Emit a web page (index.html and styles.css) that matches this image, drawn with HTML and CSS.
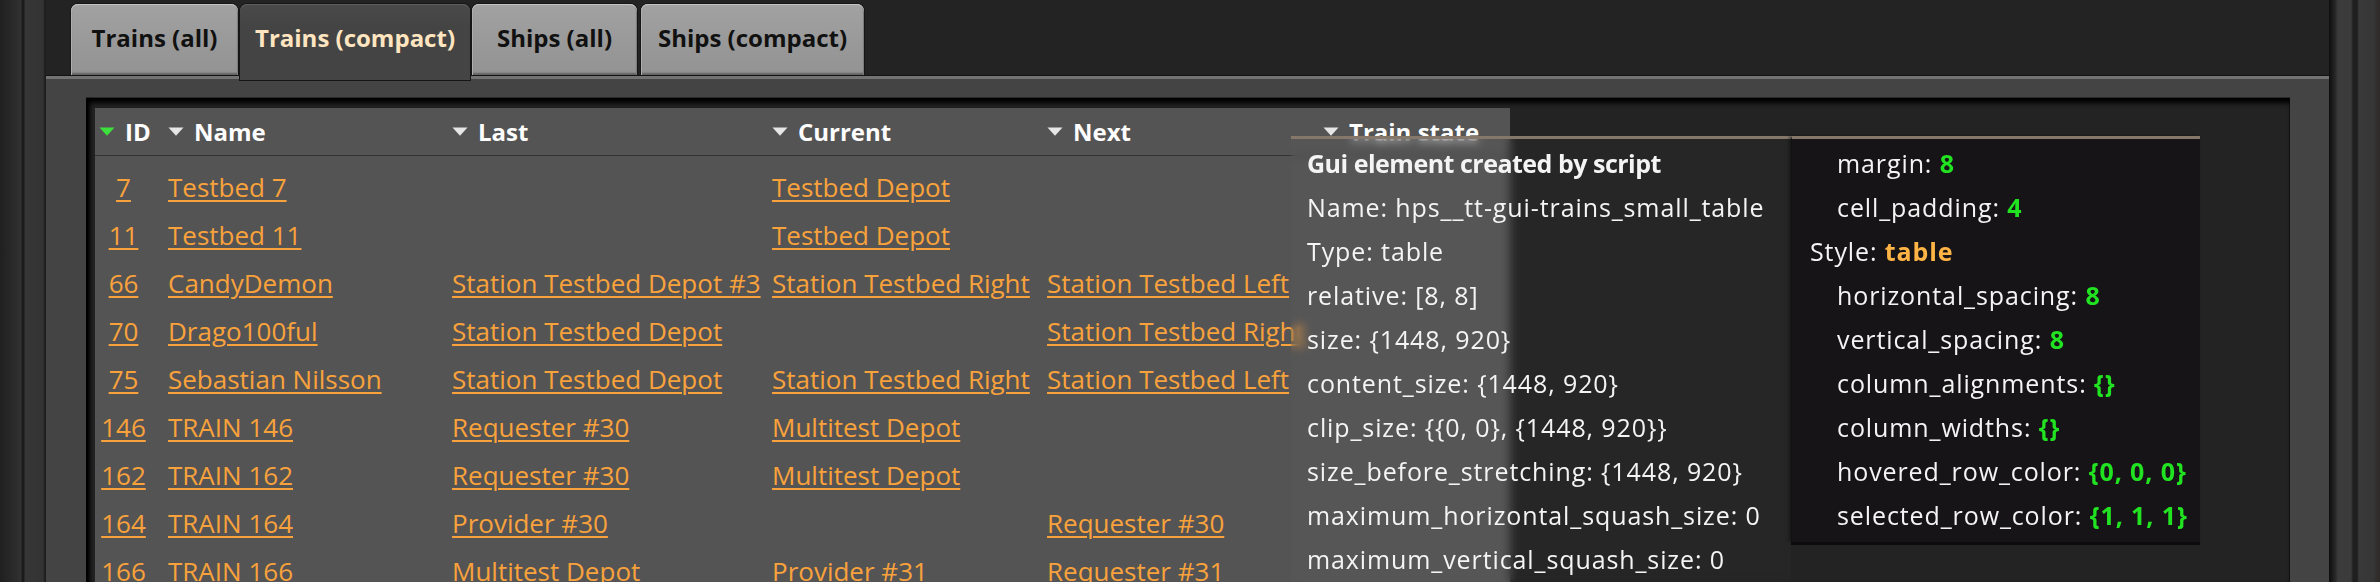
FILE: index.html
```html
<!DOCTYPE html>
<html>
<head>
<meta charset="utf-8">
<link rel="stylesheet" href="styles.css">
</head>
<body>
<div class="window">
  <div class="frame-left"></div>
  <div class="main">
    <div class="tabbar">
      <div class="tab t1">Trains (all)</div>
      <div class="tab t2 active">Trains (compact)</div>
      <div class="tab t3">Ships (all)</div>
      <div class="tab t4">Ships (compact)</div>
    </div>
    <div class="panel">
      <div class="inner">
        <div class="table">
          <div class="thead">
            <div class="th"><svg class="tri" width="16" height="9" viewBox="0 0 16 9"><polygon points="0.5,0.5 15.5,0.5 8,8.8" fill="#3ee03e"/></svg>ID</div>
            <div class="th"><svg class="tri" width="16" height="9" viewBox="0 0 16 9"><polygon points="0.5,0.5 15.5,0.5 8,8.8" fill="#e6e6e6"/></svg>Name</div>
            <div class="th"><svg class="tri" width="16" height="9" viewBox="0 0 16 9"><polygon points="0.5,0.5 15.5,0.5 8,8.8" fill="#e6e6e6"/></svg>Last</div>
            <div class="th"><svg class="tri" width="16" height="9" viewBox="0 0 16 9"><polygon points="0.5,0.5 15.5,0.5 8,8.8" fill="#e6e6e6"/></svg>Current</div>
            <div class="th"><svg class="tri" width="16" height="9" viewBox="0 0 16 9"><polygon points="0.5,0.5 15.5,0.5 8,8.8" fill="#e6e6e6"/></svg>Next</div>
            <div class="th"><svg class="tri" width="16" height="9" viewBox="0 0 16 9"><polygon points="0.5,0.5 15.5,0.5 8,8.8" fill="#e6e6e6"/></svg>Train state</div>
          </div>
          <div class="tbody">
            <div class="td id"><a>7</a></div><div class="td"><a>Testbed 7</a></div><div class="td"></div><div class="td"><a>Testbed Depot</a></div><div class="td"></div><div class="td"></div>
            <div class="td id"><a>11</a></div><div class="td"><a>Testbed 11</a></div><div class="td"></div><div class="td"><a>Testbed Depot</a></div><div class="td"></div><div class="td"></div>
            <div class="td id"><a>66</a></div><div class="td"><a>CandyDemon</a></div><div class="td"><a>Station Testbed Depot #3</a></div><div class="td"><a>Station Testbed Right</a></div><div class="td"><a>Station Testbed Left</a></div><div class="td"></div>
            <div class="td id"><a>70</a></div><div class="td"><a>Drago100ful</a></div><div class="td"><a>Station Testbed Depot</a></div><div class="td"></div><div class="td"><a>Station Testbed Right</a></div><div class="td"></div>
            <div class="td id"><a>75</a></div><div class="td"><a>Sebastian Nilsson</a></div><div class="td"><a>Station Testbed Depot</a></div><div class="td"><a>Station Testbed Right</a></div><div class="td"><a>Station Testbed Left</a></div><div class="td"></div>
            <div class="td id"><a>146</a></div><div class="td"><a>TRAIN 146</a></div><div class="td"><a>Requester #30</a></div><div class="td"><a>Multitest Depot</a></div><div class="td"></div><div class="td"></div>
            <div class="td id"><a>162</a></div><div class="td"><a>TRAIN 162</a></div><div class="td"><a>Requester #30</a></div><div class="td"><a>Multitest Depot</a></div><div class="td"></div><div class="td"></div>
            <div class="td id"><a>164</a></div><div class="td"><a>TRAIN 164</a></div><div class="td"><a>Provider #30</a></div><div class="td"></div><div class="td"><a>Requester #30</a></div><div class="td"></div>
            <div class="td id"><a>166</a></div><div class="td"><a>TRAIN 166</a></div><div class="td"><a>Multitest Depot</a></div><div class="td"><a>Provider #31</a></div><div class="td"><a>Requester #31</a></div><div class="td"></div>
          </div>
        </div>
      </div>
    </div>
  </div>
  <div class="frame-right"></div>
</div>

<div class="tooltip">
  <div class="tip-box tip-main">
    <div class="line b">Gui element created by script</div>
    <div class="line">Name: hps__tt-gui-trains_small_table</div>
    <div class="line">Type: table</div>
    <div class="line">relative: [8, 8]</div>
    <div class="line">size: {1448, 920}</div>
    <div class="line">content_size: {1448, 920}</div>
    <div class="line">clip_size: {{0, 0}, {1448, 920}}</div>
    <div class="line">size_before_stretching: {1448, 920}</div>
    <div class="line">maximum_horizontal_squash_size: 0</div>
    <div class="line">maximum_vertical_squash_size: 0</div>
  </div>
  <div class="tip-box tip-style">
    <div class="line ind">margin: <span class="g">8</span></div>
    <div class="line ind">cell_padding: <span class="g">4</span></div>
    <div class="line">Style: <span class="o">table</span></div>
    <div class="line ind">horizontal_spacing: <span class="g">8</span></div>
    <div class="line ind">vertical_spacing: <span class="g">8</span></div>
    <div class="line ind">column_alignments: <span class="g">{}</span></div>
    <div class="line ind">column_widths: <span class="g">{}</span></div>
    <div class="line ind">hovered_row_color: <span class="g">{0, 0, 0}</span></div>
    <div class="line ind">selected_row_color: <span class="g">{1, 1, 1}</span></div>
  </div>
</div>
</body>
</html>
```

FILE: styles.css
```css
html, body {
  margin: 0;
  padding: 0;
}
body {
  width: 2380px;
  height: 582px;
  overflow: hidden;
  background: #232323;
  font-family: "Open Sans", "Liberation Sans", sans-serif;
  position: relative;
}
.window {
  display: flex;
  height: 582px;
}
.frame-left {
  width: 46px;
  flex: none;
  background: linear-gradient(to right, #202020 0, #2e2e2e 18px, #333 21px, #1b1b1b 22px, #1b1b1b 24px, #363636 25px, #333 43px, #1d1d1d 45px, #1d1d1d 46px);
}
.frame-right {
  width: 51px;
  flex: none;
  background: linear-gradient(to right, #0d0d0d 0, #262626 6px, #3b3b3b 9px, #3b3b3b 22px, #202020 24px, #1e1e1e 28px, #393939 30px, #363636 44px, #2d2926 51px);
}
.main {
  flex: 1;
  display: flex;
  flex-direction: column;
  min-width: 0;
}
.tabbar {
  height: 76px;
  box-sizing: border-box;
  padding: 4px 0 0 25px;
  display: flex;
  align-items: flex-start;
  gap: 2px;
  background: #232323;
}
.tab {
  box-sizing: border-box;
  height: 72px;
  line-height: 67px;
  text-align: center;
  font-size: 24px;
  font-weight: 700;
  color: #111;
  border-radius: 7px 7px 0 0;
  background: linear-gradient(#a2a2a2, #989898 60%, #939393);
  box-shadow: inset 0 1px 0 #c4c4c4, inset 1px 0 0 #b0b0b0, inset -1px 0 0 #7c7c7c, inset 0 -3px 2px rgba(0,0,0,0.35), 0 0 0 1px #161616;
  white-space: nowrap;
}
.t1 { width: 167px; }
.t2 { width: 230px; }
.t3 { width: 165px; }
.t4 { width: 223px; margin-left: 2px; }
.tab.active {
  height: 76px;
  position: relative;
  z-index: 2;
  color: #ffe6c0;
  background: linear-gradient(#4a4a4a, #444 30%, #444);
  box-shadow: inset 0 1px 0 #5e5e5e, 0 0 0 1px #161616;
}
.panel {
  flex: 1;
  background: #444;
  border-top: 3px solid #737373;
  box-shadow: 0 -1px 0 #141414;
  padding: 19px 39px 0 40px;
  display: flex;
  min-height: 0;
  position: relative;
  z-index: 1;
}
.inner {
  flex: 1;
  background: #232323;
  padding: 10px 0 0 9px;
  box-shadow: inset 0 7px 5px -2px #000, inset 7px 0 4px -3px #000, inset -1px 0 0 #151515;
  border-top: 1px solid #2c2727;
  margin-top: -1px;
  overflow: hidden;
}
.table {
  width: 1415px;
  height: 100%;
  background: #545454;
  box-sizing: border-box;
  padding-left: 4px;
}
.thead, .tbody {
  display: grid;
  grid-template-columns: 57px 272px 308px 263px 264px 1fr;
  column-gap: 12px;
}
.thead {
  height: 47px;
  margin-left: -4px;
  padding-left: 4px;
  border-bottom: 1px solid #333;
}
.th {
  font-size: 24px;
  font-weight: 700;
  line-height: 47px;
  color: #fdfdfd;
  white-space: nowrap;
}
.tri {
  vertical-align: 5px;
  margin-right: 10px;
}
.tbody {
  padding-top: 7px;
}
.td {
  font-size: 26px;
  line-height: 48px;
  height: 48px;
  white-space: nowrap;
  color: #f9a23c;
}
.td a {
  color: #f9a23c;
  text-decoration: underline;
  text-decoration-thickness: 1.5px;
  text-underline-offset: 3px;
}
.td.id {
  text-align: center;
  padding-right: 8px;
}
.tooltip {
  position: absolute;
  left: 1291px;
  top: 136px;
  display: flex;
  align-items: flex-start;
  z-index: 5;
  font-size: 25px;
  letter-spacing: 0.9px;
  color: #f4f4f4;
}
.tip-box {
  box-sizing: border-box;
  border-top: 3px solid #85786a;
  backdrop-filter: blur(5px);
  background: rgba(255, 255, 255, 0.015);
}
.tip-main {
  width: 500px;
  height: 470px;
  padding: 2px 0 0 16px;
}
.tip-style {
  width: 409px;
  height: 406px;
  padding: 2px 0 0 18px;
  border-left: 1px solid #111;
  box-shadow: 0 3px 0 #0c0c0c, -2px 0 3px rgba(0,0,0,0.4);
  background: rgba(22, 20, 22, 0.92);
}
.line {
  line-height: 44px;
  height: 44px;
  white-space: nowrap;
}
.line.b {
  font-weight: 700;
  letter-spacing: -0.5px;
}
.line.ind {
  padding-left: 27px;
}
.g {
  color: #22e322;
  font-weight: 700;
}
.o {
  color: #ffb446;
  font-weight: 700;
}
```
